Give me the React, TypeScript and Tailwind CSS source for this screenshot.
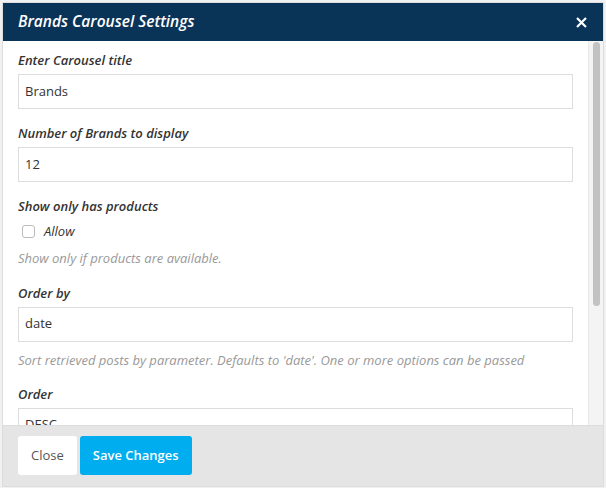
import React from "react";

const font = { fontFamily: '"Open Sans", "Noto Sans", sans-serif' };

function Label({ children }: { children: React.ReactNode }) {
  return (
    <div className="text-[13px] font-semibold italic text-[#333] leading-[17px]">{children}</div>
  );
}

function Input({ value, mt }: { value: string; mt: string }) {
  return (
    <div className={`${mt} h-[35px] w-[555px] border border-[#ddd] bg-white pl-[6px] flex items-center text-[13px] text-[#333]`}>
      {value}
    </div>
  );
}

function Help({ children }: { children: React.ReactNode }) {
  return <div className="text-[13px] italic text-[#999] leading-[17px]">{children}</div>;
}

export default function App() {
  return (
    <div className="w-[606px] h-[488px] bg-[#f1f1f1] relative" style={font}>
      <div className="absolute left-[2px] top-[2px] w-[602px] h-[485px] border border-[#ddd] bg-white flex flex-col overflow-hidden">
        <div className="h-[38px] bg-[#0a3358] flex items-center justify-between pl-[15px] pr-[16px] shrink-0">
          <div className="text-white text-[15.5px] font-semibold italic">Brands Carousel Settings</div>
          <svg width="11" height="11" viewBox="0 0 11 11">
            <path d="M1 1L10 10M10 1L1 10" stroke="white" strokeWidth="2.2" />
          </svg>
        </div>
        <div className="flex h-[384px] shrink-0">
          <div className="flex-1 overflow-hidden pl-[15px] pt-[11px]">
            <Label>Enter Carousel title</Label>
            <Input value="Brands" mt="mt-[5px]" />
            <div className="h-[16px]" />
            <Label>Number of Brands to display</Label>
            <Input value="12" mt="mt-[5px]" />
            <div className="h-[16px]" />
            <Label>Show only has products</Label>
            <div className="flex items-center mt-[7px] ml-[4px]">
              <div className="w-[13px] h-[13px] border border-[#bbb] rounded-[3px] bg-white" />
              <span className="ml-[9px] text-[13px] italic text-[#333]">Allow</span>
            </div>
            <div className="mt-[8px]">
              <Help>Show only if products are available.</Help>
            </div>
            <div className="h-[18px]" />
            <Label>Order by</Label>
            <Input value="date" mt="mt-[5px]" />
            <div className="mt-[10px]">
              <Help>Sort retrieved posts by parameter. Defaults to 'date'. One or more options can be passed</Help>
            </div>
            <div className="h-[17px]" />
            <Label>Order</Label>
            <Input value="DESC" mt="mt-[5px]" />
          </div>
          <div className="w-[15px] bg-[#f4f4f4] border-l border-[#e8e8e8] flex justify-center pt-[1px]">
            <div className="w-[7px] h-[264px] rounded-full bg-[#c2c2c2]" />
          </div>
        </div>
        <div className="flex-1 bg-[#e5e5e5] border-t border-[#ddd] flex items-start gap-[3px] pl-[15px] pt-[10px]">
          <button className="h-[39px] px-[13px] bg-white rounded-[3px] text-[13px] text-[#555]">Close</button>
          <button className="h-[39px] px-[13px] bg-[#00adee] rounded-[3px] text-[13px] text-white font-semibold">Save Changes</button>
        </div>
      </div>
    </div>
  );
}
